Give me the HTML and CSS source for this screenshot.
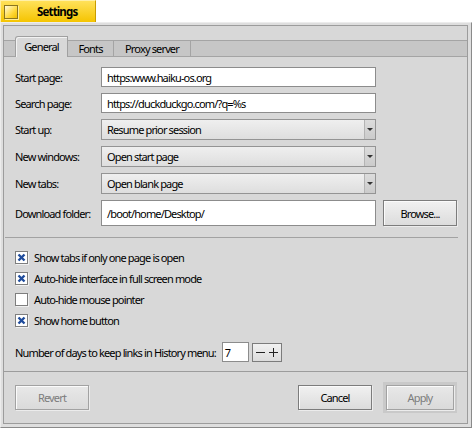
FILE: index.html
```html
<!DOCTYPE html>
<html>
<head>
<meta charset="utf-8">
<link rel="stylesheet" href="styles.css">
</head>
<body>
<div class="window">
  <div class="titletab">
    <span class="closebox"></span>
    <span class="title">Settings</span>
  </div>
  <div class="frame">
    <div class="inner">
      <div class="tabview">
        <div class="tabstrip">
          <div class="tab active">General</div>
          <div class="tab tab-fonts">Fonts</div>
          <div class="tab tab-proxy">Proxy server</div>
        </div>
        <div class="tabbody">
          <div class="form">
            <div class="label">Start page:</div>
            <div class="field textbox">https:www.haiku-os.org</div>
            <div class="label">Search page:</div>
            <div class="field textbox">https://duckduckgo.com/?q=%s</div>
            <div class="label">Start up:</div>
            <div class="field menu"><span class="menu-text">Resume prior session</span><span class="menu-arrow"></span></div>
            <div class="label">New windows:</div>
            <div class="field menu"><span class="menu-text">Open start page</span><span class="menu-arrow"></span></div>
            <div class="label">New tabs:</div>
            <div class="field menu"><span class="menu-text">Open blank page</span><span class="menu-arrow"></span></div>
            <div class="label">Download folder:</div>
            <div class="field textbox">/boot/home/Desktop/</div>
            <div class="browse-cell"><div class="button browse">Browse...</div></div>
          </div>
          <div class="sep"></div>
          <div class="checks">
            <div class="check"><span class="box"><svg viewBox="0 0 13 13" width="13" height="13"><path d="M3.5 3.5 L9.5 9.5 M9.5 3.5 L3.5 9.5" stroke="#1f4c9c" stroke-width="2.4" fill="none"/></svg></span><span>Show tabs if only one page is open</span></div>
            <div class="check"><span class="box"><svg viewBox="0 0 13 13" width="13" height="13"><path d="M3.5 3.5 L9.5 9.5 M9.5 3.5 L3.5 9.5" stroke="#1f4c9c" stroke-width="2.4" fill="none"/></svg></span><span>Auto-hide interface in full screen mode</span></div>
            <div class="check"><span class="box"></span><span>Auto-hide mouse pointer</span></div>
            <div class="check"><span class="box"><svg viewBox="0 0 13 13" width="13" height="13"><path d="M3.5 3.5 L9.5 9.5 M9.5 3.5 L3.5 9.5" stroke="#1f4c9c" stroke-width="2.4" fill="none"/></svg></span><span>Show home button</span></div>
          </div>
          <div class="history">
            <span>Number of days to keep links in History menu:</span>
            <span class="daysbox">7</span>
            <span class="spin"><svg viewBox="0 0 30 19" width="30" height="19"><path d="M4 9.5 H13 M17 9.5 H26 M21.5 5 V14" stroke="#222" stroke-width="1" fill="none"/></svg></span>
          </div>
        </div>
      </div>
      <div class="buttons">
        <div class="button disabled">Revert</div>
        <div class="spacer"></div>
        <div class="button">Cancel</div>
        <div class="default-frame"><div class="button disabled">Apply</div></div>
      </div>
    </div>
  </div>
</div>
</body>
</html>
```
FILE: styles.css
```css
* { box-sizing: border-box; }
html, body { margin: 0; padding: 0; background: #ffffff; }
body {
  font-family: "Noto Sans", "DejaVu Sans", sans-serif;
  font-size: 11px;
  letter-spacing: -0.85px;
  color: #000;
}
.window {
  width: 472px;
  height: 428px;
  display: flex;
  flex-direction: column;
}
.titletab {
  flex: none;
  width: 96px;
  height: 22px;
  display: flex;
  align-items: center;
  padding-left: 3px;
  background: linear-gradient(#ffe15a, #f5c400);
  border-left: 1px solid #ffeea0;
  border-top: 1px solid #fff0a8;
  border-right: 1px solid #c89c00;
}
.closebox {
  width: 14px;
  height: 14px;
  border: 1px solid #8a7420;
  background: linear-gradient(135deg, #fffbe0, #ffd83a 60%, #f0bf00);
  box-shadow: 1px 1px 0 #ffee99;
}
.title {
  margin-left: 19px;
  font-weight: bold;
  font-size: 11.5px;
}
.frame {
  flex: 1;
  display: flex;
  border: 1px solid;
  border-color: #ececec #8a8a8a #8a8a8a #ececec;
  padding: 2px 3px 3px 2px;
  background: #dedede;
}
.inner {
  flex: 1;
  display: flex;
  flex-direction: column;
  border: 1px solid #9c9c9c;
  background: #d8d8d8;
}
.tabview { margin-top: 10px; }
.tabstrip {
  display: flex;
  height: 21px;
  padding-left: 11px;
  background: linear-gradient(to bottom,
    transparent 0, transparent 4px,
    #a4a4a4 4px, #a4a4a4 5px,
    #c6c6c6 5px, #c6c6c6 20px,
    #a4a4a4 20px, #a4a4a4 21px);
}
.tab {
  margin-top: 5px;
  height: 15px;
  line-height: 15px;
  text-align: center;
  border-right: 1px solid #a4a4a4;
}
.tab.active {
  margin-top: 0;
  width: 53px;
  height: 21px;
  line-height: 20px;
  border: 1px solid #a0a0a0;
  border-bottom: none;
  border-top-left-radius: 3px;
  background: #d8d8d8;
  box-shadow: inset 1px 1px 0 #f2f2f2;
}
.tab-fonts { width: 46px; }
.tab-proxy { width: 77px; }
.tabbody {
  border-bottom: 1px solid #9c9c9c;
  padding: 10px 10px 9px 11px;
}
.form {
  display: grid;
  grid-template-columns: 86px 275px 81px;
  grid-template-rows: 20px 20px 21px 21px 21px 26px;
  row-gap: 6px;
}
.label { grid-column: 1; align-self: center; white-space: nowrap; }
.field {
  grid-column: 2;
  display: flex;
  align-items: center;
  white-space: nowrap;
}
.textbox {
  background: #fff;
  border: 1px solid #8c8c8c;
  padding-left: 5px;
}
.menu {
  border: 1px solid #949494;
  background: linear-gradient(#efefef, #dedede);
}
.menu-text { flex: 1; padding-left: 5px; }
.menu-arrow {
  width: 11px;
  align-self: stretch;
  border-left: 1px solid #b4b4b4;
  background: linear-gradient(#dcdcdc, #cbcbcb);
  display: flex;
  align-items: center;
  justify-content: center;
}
.menu-arrow::before {
  content: "";
  width: 0;
  height: 0;
  border-left: 3px solid transparent;
  border-right: 3px solid transparent;
  border-top: 3px solid #333;
}
.browse-cell { grid-column: 3; display: flex; justify-content: flex-end; }
.button {
  width: 74px;
  height: 25px;
  display: flex;
  align-items: center;
  justify-content: center;
  border: 1px solid #7c7c7c;
  background: linear-gradient(#f1f1f1, #dcdcdc);
  box-shadow: inset 1px 1px 0 #fbfbfb, 1px 1px 0 #ececec;
}
.button.browse { height: 26px; }
.button.disabled {
  color: #7c7c7c;
  border-color: #a2a2a2;
  background: linear-gradient(#e8e8e8, #dadada);
}
.sep {
  height: 1px;
  background: #a2a2a2;
  margin: 11px -1px 0 -10px;
}
.checks { margin-top: 9px; }
.check {
  height: 21px;
  display: flex;
  align-items: center;
  gap: 6px;
}
.box {
  width: 13px;
  height: 13px;
  background: #fff;
  border: 1px solid #7e7e7e;
  box-shadow: 1px 1px 0 #f0f0f0;
  position: relative;
  flex: none;
}
.box svg { position: absolute; left: -1px; top: -1px; }
.history {
  margin-top: 11px;
  height: 20px;
  display: flex;
  align-items: center;
}
.daysbox {
  margin-left: 6px;
  width: 27px;
  height: 20px;
  background: #fff;
  border: 1px solid #8c8c8c;
  padding-left: 2px;
  display: flex;
  align-items: center;
}
.spin {
  margin-left: 3px;
  width: 30px;
  height: 19px;
  border: 1px solid #7c7c7c;
  background: linear-gradient(#f1f1f1, #dcdcdc);
  display: flex;
}
.spin svg { margin: -1px; }
.buttons {
  flex: 1;
  display: flex;
  align-items: center;
  padding: 0 10px 0 11px;
}
.spacer { flex: 1; }
.default-frame {
  margin-left: 11px;
  width: 74px;
  height: 31px;
  padding: 3px;
  background: #c9c9c9;
}
.default-frame .button { width: 68px; }
```
